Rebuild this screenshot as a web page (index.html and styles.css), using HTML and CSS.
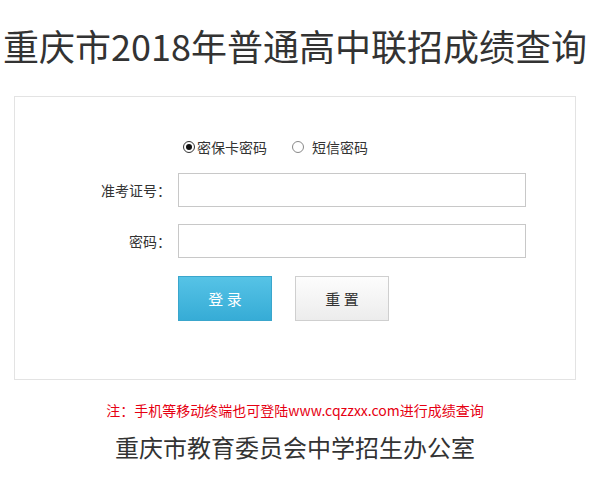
FILE: index.html
```html
<!DOCTYPE html>
<html lang="zh-CN">
<head>
<meta charset="utf-8">
<title>重庆市2018年普通高中联招成绩查询</title>
<link rel="stylesheet" href="styles.css">
</head>
<body>
<div class="page">
  <h1 class="title">重庆市2018年普通高中联招成绩查询</h1>
  <div class="card">
    <div class="row radios">
      <span class="label-space"></span>
      <div class="radio-group">
        <span class="radio checked"></span><span class="radio-text">密保卡密码</span>
        <span class="radio second"></span><span class="radio-text">短信密码</span>
      </div>
    </div>
    <div class="row field">
      <label class="label">准考证号：</label>
      <div class="input"></div>
    </div>
    <div class="row field">
      <label class="label">密码：</label>
      <div class="input"></div>
    </div>
    <div class="row buttons">
      <span class="label-space"></span>
      <button class="btn btn-login">登 录</button>
      <button class="btn btn-reset">重 置</button>
    </div>
  </div>
  <p class="note">注：手机等移动终端也可登陆www.cqzzxx.com进行成绩查询</p>
  <p class="footer">重庆市教育委员会中学招生办公室</p>
</div>
</body>
</html>
```
FILE: styles.css
```css
* { box-sizing: border-box; }
html, body { margin: 0; padding: 0; background: #fff; }
body {
  font-family: "Microsoft YaHei", "Noto Sans CJK SC", "Noto Sans", sans-serif;
  color: #333;
}
.page { width: 590px; }
.title {
  margin: 0;
  padding-top: 22px;
  height: 96px;
  font-size: 36px;
  line-height: 46px;
  font-weight: normal;
  color: #333;
  text-align: center;
  white-space: nowrap;
  letter-spacing: 0;
}
.card {
  margin: 0 14px;
  height: 284px;
  border: 1px solid #e3e3e3;
  padding-top: 40px;
}
.row { display: flex; align-items: center; }
.label-space { width: 163px; flex: none; }
.radios { height: 20px; }
.radio-group {
  display: flex;
  align-items: center;
  padding-left: 5px;
  font-size: 14px;
  color: #333;
}
.radio {
  width: 12px;
  height: 12px;
  border-radius: 50%;
  border: 1px solid #777;
  position: relative;
  flex: none;
}
.radio.checked { border-color: #333; }
.radio.checked::after {
  content: "";
  position: absolute;
  left: 2px; top: 2px;
  width: 6px; height: 6px;
  border-radius: 50%;
  background: #111;
}
.radio.second { margin-left: 25px; border-color: #888; }
.radio-text { margin-left: 2px; line-height: 20px; }
.radio.second + .radio-text { margin-left: 8px; }
.field { margin-top: 16px; }
.field + .field { margin-top: 17px; }
.label {
  width: 156px;
  margin-right: 7px;
  text-align: right;
  font-size: 14px;
  color: #333;
}
.input {
  width: 348px;
  height: 34px;
  border: 1px solid #c8c8c8;
  background: #fff;
}
.buttons { margin-top: 18px; }
.btn {
  width: 94px;
  height: 45px;
  font-family: inherit;
  font-size: 15px;
  padding: 0;
  cursor: pointer;
}
.btn-login {
  color: #fff;
  border: 1px solid #3aa6cc;
  background: linear-gradient(#56c3e6, #36acd6);
}
.btn-reset {
  margin-left: 23px;
  color: #333;
  border: 1px solid #cfcfcf;
  background: linear-gradient(#fdfdfd, #ececec);
}
.note {
  margin: 20px 0 0;
  text-align: center;
  font-size: 14px;
  line-height: 20px;
  color: #e60012;
}
.footer {
  margin: 10px 0 0;
  text-align: center;
  font-size: 24px;
  line-height: 34px;
  color: #333;
}
```
